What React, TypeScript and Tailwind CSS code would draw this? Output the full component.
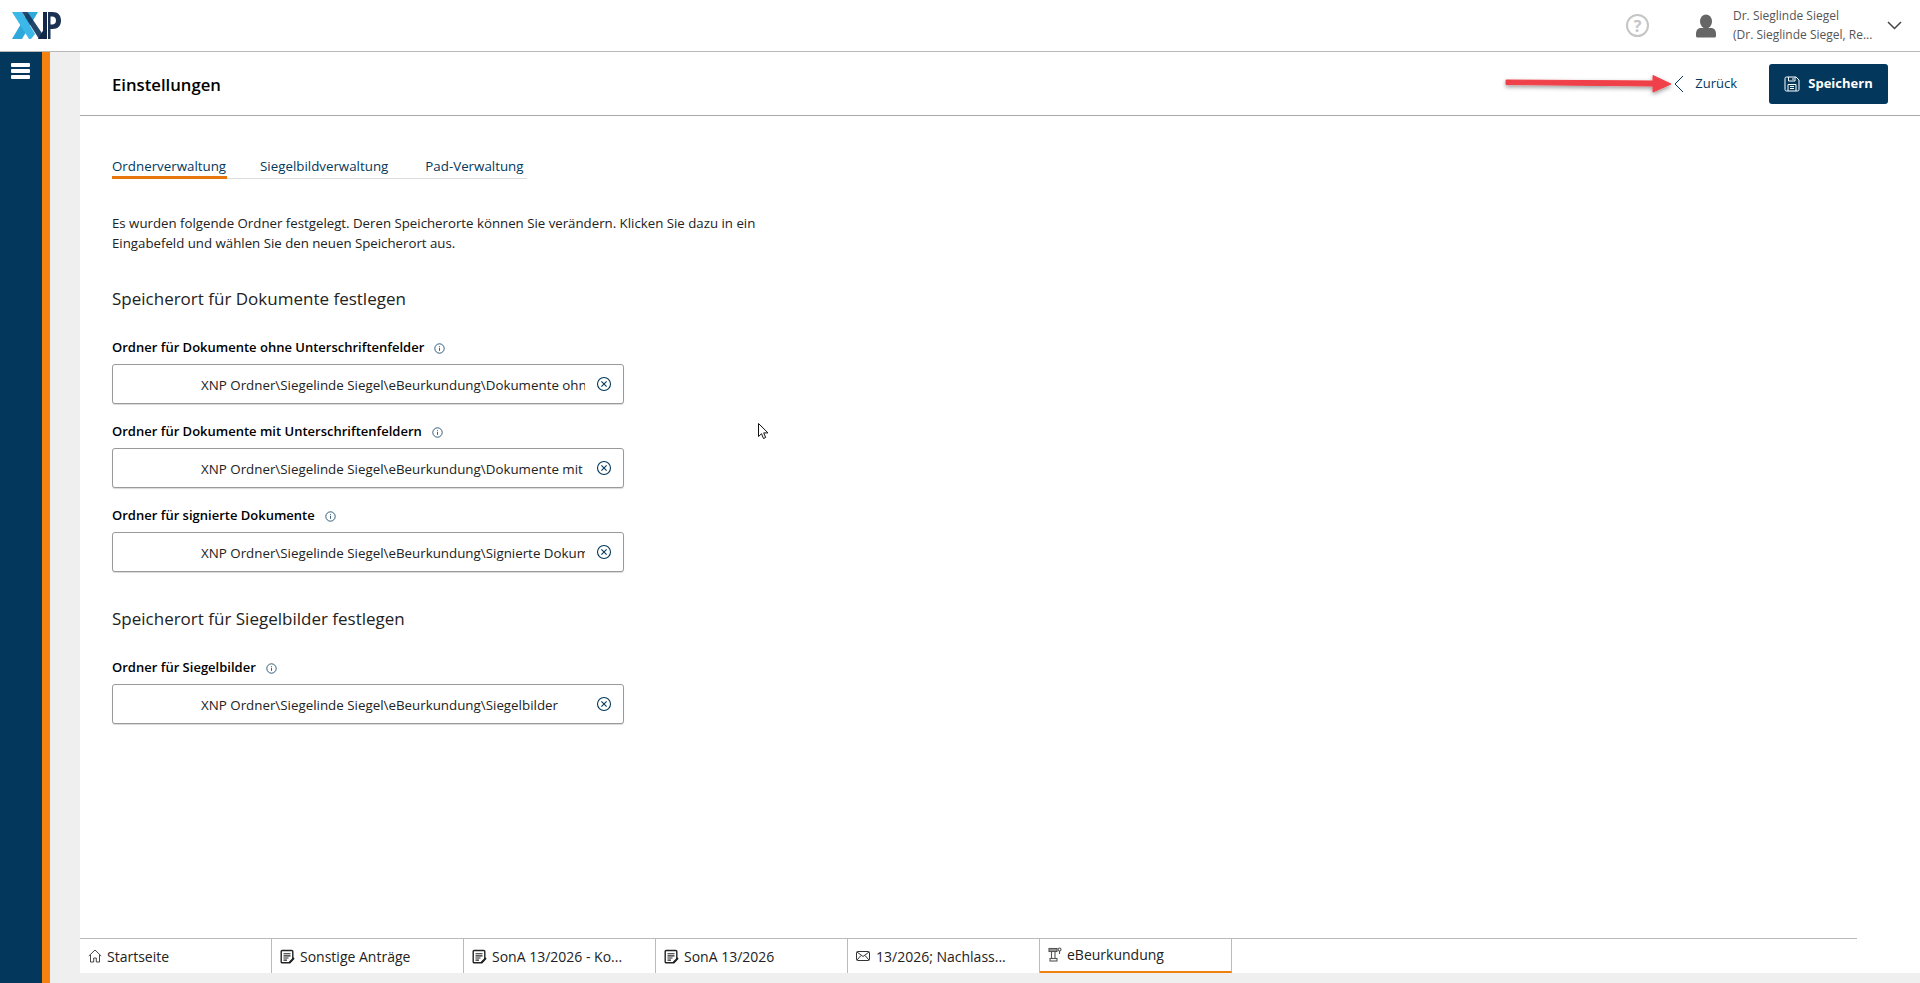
import React from "react";

const font = { fontFamily: '"Open Sans", sans-serif' };

function Info() {
  return (
    <svg width="11" height="11" viewBox="0 0 11 11" fill="none" className="ml-[10px] mt-[2px]">
      <circle cx="5.5" cy="5.5" r="4.7" stroke="#03385c" strokeWidth="0.8" />
      <path d="M5.5 3v.8M5.5 4.8v3" stroke="#03385c" strokeWidth="0.8" />
    </svg>
  );
}

function Field({ label, value, mtop }: { label: string; value: string; mtop: string }) {
  return (
    <div className={mtop}>
      <div className="flex items-center h-[20px] text-[13px] font-semibold text-black leading-[20px]">
        {label}
        <Info />
      </div>
      <div className="mt-[7px] w-[512px] h-[40px] border border-[#999] rounded-[3px] flex items-center bg-white shadow-[0_1px_1px_rgba(0,0,0,0.15)]">
        <div className="ml-[88px] w-[384px] overflow-hidden whitespace-nowrap text-[13.35px] text-[#222] leading-[20px] pt-[2px]">{value}</div>
        <svg width="16" height="16" viewBox="0 0 16 16" fill="none" className="ml-[11px] -mt-[1px]">
          <circle cx="8" cy="8" r="6.5" stroke="#03385c" strokeWidth="1.1" />
          <path d="M5.4 5.4l5.2 5.2M10.6 5.4l-5.2 5.2" stroke="#03385c" strokeWidth="1.1" />
        </svg>
      </div>
    </div>
  );
}

function DocIcon() {
  return (
    <svg width="15" height="15" viewBox="0 0 15 15" fill="none" className="mr-[5px] shrink-0">
      <path d="M1.200 2.500a1 1 0 011-1h9.600a1 1 0 011 1v8l-3 3.300H2.200a1 1 0 01-1-1z" stroke="#222" strokeWidth="1.400" />
      <path d="M3.500 4.800h7M3.500 6.900h7M3.500 9h5M3.500 11.100h3.500" stroke="#222" strokeWidth="1.100" />
      <path d="M9.500 13.500l4.500-4.500" stroke="#222" strokeWidth="1.800" />
    </svg>
  );
}

function Tab({ icon, label, active }: { icon: React.ReactNode; label: string; active?: boolean }) {
  return (
    <div className={`w-[192px] shrink-0 h-full flex items-center pl-[8px] border-r border-[#bbb] text-[14px] text-[#222] bg-white ${active ? "border-b-[2px] border-b-[#f08010] pb-[1px]" : ""}`}>
      {icon}
      <span className="whitespace-nowrap">{label}</span>
    </div>
  );
}

export default function App() {
  return (
    <div style={font} className="w-full h-[983px] flex flex-col bg-[#efefef] overflow-hidden relative">
      <header className="h-[52px] shrink-0 bg-white border-b border-[#b9b9b9] flex items-center">
        <svg width="50" height="30" viewBox="0 0 50 30" className="ml-[12px]">
          <path d="M16 1h10L10 28H0z" fill="#2fa9dc" />
          <path d="M0 1h10l13 22-4 5h-2z" fill="#3cb8e8" />
          <path d="M10 1h5.500L34 28h-7z" fill="#12365c" opacity="0.92" />
          <path d="M26 28l6-10v10z" fill="#12294a" />
          <path d="M31 1h4v27h-4z" fill="#14294a" />
          <path d="M36 1h4.500c5.500 0 8.500 3.300 8.500 8.500S46 18 40.500 18H38.500v-4.500h1.500c2.500 0 4-1.500 4-4s-1.500-4-4-4h-1.500V28H36z" fill="#1b3152" />
        </svg>
        <div className="ml-auto flex items-center">
          <div className="w-[23px] h-[23px] rounded-full border-[2.500px] border-[#c5c5c5] text-[#c5c5c5] font-bold text-[16px] leading-none flex items-center justify-center">?</div>
          <svg width="20" height="24" viewBox="0 0 20 24" className="ml-[47px]" fill="#666">
            <ellipse cx="10" cy="7.500" rx="6" ry="7" />
            <path d="M0 20c0-4 2-6 5-6h10c3 0 5 2 5 6v2c0 1-1 1.500-2 1.500H2c-1 0-2-.5-2-1.500z" />
          </svg>
          <div className="ml-[17px] -mt-[2px] w-[151px] text-[12px] leading-[19px] text-[#555] whitespace-nowrap">
            <div>Dr. Sieglinde Siegel</div>
            <div>(Dr. Sieglinde Siegel, Re...</div>
          </div>
          <svg width="15" height="9" viewBox="0 0 15 9" fill="none" className="ml-[3px] mr-[18px]">
            <path d="M1 1l6.500 6.500L14 1" stroke="#444" strokeWidth="1.5" />
          </svg>
        </div>
      </header>

      <div className="flex-1 flex min-h-0">
        <aside className="w-[42px] shrink-0 bg-[#03385c] flex flex-col items-center pt-[11px]">
          <div className="w-[19px] flex flex-col gap-[2px] -ml-[2px]">
            <div className="h-[4px] bg-white rounded-[1px]" />
            <div className="h-[4px] bg-white rounded-[1px]" />
            <div className="h-[4px] bg-white rounded-[1px]" />
          </div>
        </aside>
        <div className="w-[8px] shrink-0 bg-[#f5820f]" />
        <div className="w-[30px] shrink-0" />

        <main className="flex-1 min-w-0 flex flex-col">
          <div className="h-[64px] shrink-0 bg-white border-b border-[#a9a9a9] flex items-center pl-[32px]">
            <h1 className="text-[16.7px] font-semibold text-black mt-[2px]">Einstellungen</h1>
            <div className="ml-auto flex items-center">
              <svg width="11" height="18" viewBox="0 0 11 18" fill="none">
                <path d="M10 1L2 9l8 8" stroke="#03385c" strokeWidth="1" />
              </svg>
              <span className="ml-[11px] mt-[1px] text-[13px] text-[#03385c]">Zurück</span>
              <button className="ml-[32px] mr-[32px] w-[119px] h-[40px] rounded-[3px] bg-[#03385c] text-white text-[13px] font-bold flex items-center justify-center gap-[8px]">
                <svg width="16" height="16" viewBox="0 0 16 16" fill="none" stroke="#fff" strokeWidth="1">
                  <path d="M1 2.500a1.500 1.500 0 011.500-1.500H12l3 3v9.500a1.500 1.500 0 01-1.500 1.500h-11A1.500 1.500 0 011 13.500z" />
                  <path d="M4.500 1v4h6.500V1M9 2v2M4 15V8.500h8V15M6 10.500h4M6 12.500h4" />
                </svg>
                Speichern
              </button>
            </div>
          </div>

          <div className="flex-1 min-h-0 bg-white pl-[32px] pt-[39px]">
            <div className="flex w-[415px] h-[24px] border-b border-[#ddd] text-[13.33px] text-[#03385c]">
              <div className="w-[115px] h-[24px] border-b-[3px] border-[#e8740c] leading-[22px]">Ordnerverwaltung</div>
              <div className="ml-[33px] leading-[22px]">Siegelbildverwaltung</div>
              <div className="ml-[37px] leading-[22px]">Pad-Verwaltung</div>
            </div>
            <p className="mt-[34px] w-[680px] text-[13.25px] leading-[20px] text-[#222]">
              Es wurden folgende Ordner festgelegt. Deren Speicherorte können Sie verändern. Klicken Sie dazu in ein Eingabefeld und wählen Sie den neuen Speicherort aus.
            </p>
            <h2 className="mt-[34px] text-[17px] leading-[24px] text-[#222]">Speicherort für Dokumente festlegen</h2>
            <Field mtop="mt-[26px]" label="Ordner für Dokumente ohne Unterschriftenfelder" value="XNP Ordner\Siegelinde Siegel\eBeurkundung\Dokumente ohne Unterschriftenfelder" />
            <Field mtop="mt-[17px]" label="Ordner für Dokumente mit Unterschriftenfeldern" value="XNP Ordner\Siegelinde Siegel\eBeurkundung\Dokumente mit Unterschriftenfeldern" />
            <Field mtop="mt-[17px]" label="Ordner für signierte Dokumente" value="XNP Ordner\Siegelinde Siegel\eBeurkundung\Signierte Dokumente" />
            <h2 className="mt-[35px] text-[17px] leading-[24px] text-[#222]">Speicherort für Siegelbilder festlegen</h2>
            <Field mtop="mt-[26px]" label="Ordner für Siegelbilder" value="XNP Ordner\Siegelinde Siegel\eBeurkundung\Siegelbilder" />
          </div>

          <div className="h-[45px] shrink-0 bg-white">
            <div className="h-[35px] w-[1777px] flex border-t border-[#bbb] bg-white">
              <Tab label="Startseite" icon={
                <svg width="14" height="14" viewBox="0 0 14 14" fill="none" stroke="#333" strokeWidth="0.9" className="mr-[5px] shrink-0">
                  <path d="M.8 7L7 1l6.200 6M2.500 6v7h3.200V9h2.600v4h3.200V6" />
                </svg>
              } />
              <Tab label="Sonstige Anträge" icon={<DocIcon />} />
              <Tab label="SonA 13/2026 - Ko..." icon={<DocIcon />} />
              <Tab label="SonA 13/2026" icon={<DocIcon />} />
              <Tab label="13/2026; Nachlass..." icon={
                <svg width="14" height="12" viewBox="0 0 14 12" fill="none" stroke="#333" strokeWidth="1" className="mr-[6px] shrink-0">
                  <rect x="0.500" y="1.500" width="13" height="9" rx="1" />
                  <path d="M1 2l6 4.500L13 2M1 10l4-4.500M13 10L9 5.500" />
                </svg>
              } />
              <Tab active label="eBeurkundung" icon={
                <svg width="14" height="16" viewBox="0 0 14 16" fill="none" stroke="#555" strokeWidth="1.100" className="mr-[5px] shrink-0">
                  <rect x="1" y="1.500" width="8" height="3" fill="#999" />
                  <path d="M3.500 4.500v7M7 4.500v7" />
                  <rect x="2" y="11.500" width="7" height="2.500" />
                  <circle cx="11.500" cy="2.500" r="1.500" />
                  <path d="M11.500 4v3" />
                </svg>
              } />
            </div>
            <div className="h-[10px] bg-[#efefef]" />
          </div>
        </main>
      </div>

      {/* annotation arrow over the page */}
      <svg width="190" height="34" viewBox="0 0 190 34" className="absolute left-[1500px] top-[68px] pointer-events-none">
        <defs>
          <filter id="sh" x="-10%" y="-60%" width="120%" height="260%">
            <feDropShadow dx="0" dy="2" stdDeviation="2" floodColor="#000" floodOpacity="0.4" />
          </filter>
        </defs>
        <path d="M6 12 L153 13 L153 7.500 L171 16 L153 24 L153 18 L6 16.500 Z" fill="#f04048" filter="url(#sh)" strokeLinejoin="round" stroke="#f04048" />
      </svg>

      {/* mouse cursor */}
      <svg width="14" height="20" viewBox="0 0 14 20" className="absolute left-[757px] top-[422px] pointer-events-none">
        <path d="M1.500 1.500v13l3-2.800 2 4.800 2.200-1-2-4.600H11z" fill="#fff" stroke="#111" strokeWidth="1" />
      </svg>
    </div>
  );
}
